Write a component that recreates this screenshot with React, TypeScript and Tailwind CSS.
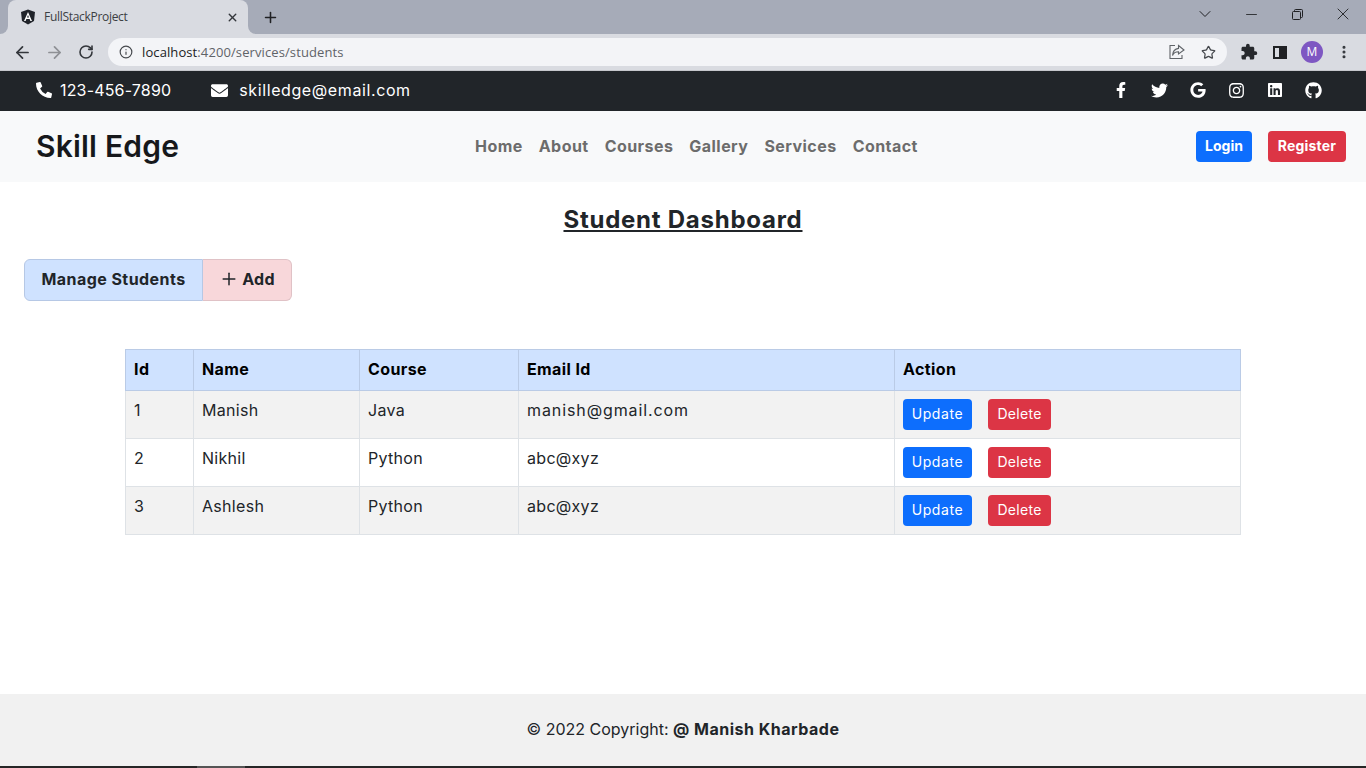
import { ArrowLeft, ArrowRight, RotateCw, Info, Star, Plus, X, Minus, ChevronDown, EllipsisVertical } from 'lucide-react';
import { FaPhoneAlt, FaEnvelope, FaFacebookF, FaTwitter, FaGoogle, FaInstagram, FaLinkedin, FaGithub } from 'react-icons/fa';
import { MdExtension } from 'react-icons/md';

const students = [
  { id: 1, name: 'Manish', course: 'Java', email: 'manish@gmail.com', emailClass: 'tracking-[0.9px]' },
  { id: 2, name: 'Nikhil', course: 'Python', email: 'abc@xyz', emailClass: 'tracking-[0.3px]' },
  { id: 3, name: 'Ashlesh', course: 'Python', email: 'abc@xyz', emailClass: 'tracking-[0.3px]' },
];

const navItems = ['Home', 'About', 'Courses', 'Gallery', 'Services', 'Contact'];

const BrowserBar = () => (
  <div className="font-['Open_Sans',sans-serif]">
    {/* tab strip */}
    <div className="h-[34px] bg-[#a6abb8] flex items-center pl-2">
      <div className="relative w-[240px] h-[34px] bg-[#d9dbe1] rounded-t-lg flex items-center pl-3 pr-[9px] text-[12px] tracking-[-0.3px] text-[#3c4043]">
        <div className="absolute left-[-8px] bottom-0 w-2 h-2 bg-[#d9dbe1]">
          <div className="w-full h-full bg-[#a6abb8] rounded-br-lg" />
        </div>
        <div className="absolute right-[-8px] bottom-0 w-2 h-2 bg-[#d9dbe1]">
          <div className="w-full h-full bg-[#a6abb8] rounded-bl-lg" />
        </div>
        <svg width="16" height="16" viewBox="0 0 16 16" className="mr-2 shrink-0">
          <path d="M8 0.5 L15 3 L14 12 L8 15.5 L2 12 L1 3 Z" fill="#20232a" />
          <path d="M8 3 L4 12 H5.6 L6.4 10 H9.6 L10.4 12 H12 Z M7 8.6 L8 6 L9 8.6 Z" fill="#fff" fillRule="evenodd" />
        </svg>
        <span className="flex-1">FullStackProject</span>
        <X size={13} strokeWidth={2.6} className="text-[#33363b]" />
      </div>
      <Plus size={17} strokeWidth={2.2} className="text-[#202124] ml-[14px]" />
      <div className="flex-1" />
      <div className="self-start flex h-[28px] text-[#202124]">
        <div className="w-[46px] flex items-center justify-center"><ChevronDown size={20} strokeWidth={1.2} /></div>
        <div className="w-[46px] flex items-center justify-center"><Minus size={17} strokeWidth={1.2} /></div>
        <div className="w-[46px] flex items-center justify-center">
          <svg width="11" height="11" viewBox="0 0 11 11" fill="none" stroke="#202124">
            <rect x="0.5" y="2.5" width="8" height="8" rx="1" />
            <path d="M2.5 2.5 V1.5 Q2.5 0.5 3.5 0.5 H9.5 Q10.5 0.5 10.5 1.5 V7.5 Q10.5 8.5 9.5 8.5 H8.5" />
          </svg>
        </div>
        <div className="w-[46px] flex items-center justify-center"><X size={20} strokeWidth={1.1} /></div>
      </div>
    </div>
    {/* toolbar */}
    <div className="h-[36px] bg-[#d9dbe1] flex items-center border-b border-[#c5c7cc] box-content">
      <ArrowLeft size={19} strokeWidth={2.2} className="text-[#33363b] ml-[13px]" />
      <ArrowRight size={19} strokeWidth={2.2} className="text-[#8e9095] ml-[13px]" />
      <RotateCw size={16} strokeWidth={2.4} className="text-[#33363b] ml-[14px]" />
      <div className="ml-[14px] w-[1119px] h-[28px] bg-[#f3f4f7] rounded-full flex items-center pl-[11px] text-[13px] text-[#5f6368]">
        <Info size={14} strokeWidth={2} className="text-[#45484d] mr-[9px]" />
        <span className="pt-[2px] tracking-[0.1px]"><span className="text-[#202124]">localhost</span>:4200/services/students</span>
        <div className="flex-1" />
        <svg width="16" height="16" viewBox="0 0 16 16" fill="none" stroke="#5f6368" strokeWidth="1.1" className="mr-[16px]">
          <path d="M6 1.5 H1 V14.5 H13 V11" />
          <path d="M9.5 1.5 L15 6 L9.5 10 V7.8 C6.5 7.8 4.5 9 3.5 11.5 C3.8 7.5 6 4.8 9.5 4.4 Z" />
        </svg>
        <Star size={15} strokeWidth={2} className="text-[#45484d] mr-[11px]" />
      </div>
      <MdExtension size={18} className="text-[#26282c] ml-[13px]" />
      <div className="ml-[15px] w-[14px] h-[13px] border-2 border-[#202124] flex justify-end">
        <div className="w-[6px] bg-[#202124]" />
      </div>
      <div className="ml-[14px] w-[22px] h-[22px] rounded-full bg-[#7e57c2] text-white text-[12px] flex items-center justify-center">M</div>
      <EllipsisVertical size={16} strokeWidth={2.6} className="text-[#33363b] ml-[13px]" />
    </div>
  </div>
);

const TopBar = () => (
  <div className="h-[40px] pb-[2px] bg-[#212529] text-white flex items-center pl-[36px] pr-[44px] text-[16px]">
    <FaPhoneAlt size={16} />
    <span className="ml-[8px] tracking-[0.17px]">123-456-7890</span>
    <FaEnvelope size={17} className="ml-[40px]" />
    <span className="ml-[11px] tracking-[0.6px]">skilledge@email.com</span>
    <div className="flex-1" />
    <div className="flex items-center gap-[22px]">
      <FaFacebookF size={16} />
      <FaTwitter size={17} />
      <FaGoogle size={16} />
      <FaInstagram size={17} />
      <FaLinkedin size={16} />
      <FaGithub size={17} />
    </div>
  </div>
);

const Navbar = () => (
  <div className="h-[71px] bg-[#f8f9fa] flex items-center pl-[36px] pr-[20px]">
    <div className="w-[143px] text-[30px] font-semibold tracking-[0.2px] text-[#16181b] whitespace-nowrap">Skill Edge</div>
    <nav className="ml-[296px] pb-[2px] flex gap-[16px] text-[16px] font-bold tracking-[0.45px] text-[#6c6c6c]">
      {navItems.map((item) => (
        <a key={item}>{item}</a>
      ))}
    </nav>
    <div className="flex-1" />
    <button className="w-[56px] h-[31px] pb-[2px] bg-[#0d6efd] text-white text-[14px] font-bold rounded">Login</button>
    <button className="ml-[16px] w-[78px] h-[31px] pb-[2px] bg-[#dc3545] text-white text-[14px] font-bold tracking-[0.2px] rounded">Register</button>
  </div>
);

const StudentTable = () => (
  <table className="mt-[48px] mx-auto w-[1116px] table-fixed border-collapse text-[16px] text-[#212529]">
    <colgroup>
      <col className="w-[68px]" />
      <col className="w-[166px]" />
      <col className="w-[159px]" />
      <col className="w-[376px]" />
      <col />
    </colgroup>
    <thead>
      <tr className="h-[41px] bg-[#cfe2ff] text-black text-left">
        {['Id', 'Name', 'Course', 'Email Id', 'Action'].map((h) => (
          <th key={h} className="border border-[#bacbe6] px-2 pb-[2px] font-bold tracking-[0.4px]">{h}</th>
        ))}
      </tr>
    </thead>
    <tbody className="tracking-[0.3px]">
      {students.map((s, i) => (
        <tr key={s.id} className={i % 2 === 0 ? 'h-[48px] bg-[#f2f2f2]' : 'h-[48px] bg-white'}>
          <td className="border border-[#dee2e6] px-2 pt-[7px] align-top">{s.id}</td>
          <td className="border border-[#dee2e6] px-2 pt-[7px] align-top">{s.name}</td>
          <td className="border border-[#dee2e6] px-2 pt-[7px] align-top">{s.course}</td>
          <td className={`border border-[#dee2e6] px-2 pt-[7px] align-top ${s.emailClass}`}>{s.email}</td>
          <td className="border border-[#dee2e6] px-2 align-middle">
            <div className="flex gap-[16px] text-[14px] text-white">
              <button className="w-[69px] h-[31px] pb-[2px] bg-[#0d6efd] rounded tracking-[0.6px]">Update</button>
              <button className="w-[63px] h-[31px] pb-[2px] bg-[#dc3545] rounded tracking-[0.3px]">Delete</button>
            </div>
          </td>
        </tr>
      ))}
    </tbody>
  </table>
);

export default function App() {
  return (
    <div className="h-[768px] overflow-hidden flex flex-col bg-white font-['Inter',sans-serif]">
      <BrowserBar />
      <TopBar />
      <Navbar />
      <main className="flex-1 pt-[20px]">
        <h1 className="text-center text-[24px] leading-[36px] font-bold tracking-[0.75px] text-[#212529] underline">Student Dashboard</h1>
        <div className="ml-[24px] mt-[21px] flex w-[268px] h-[42px] text-[16px] font-bold text-[#212529]">
          <div className="w-[179px] pb-[2px] bg-[#cfe2ff] border border-[#b6c8e5] rounded-l-md flex items-center justify-center tracking-[0.45px]">Manage Students</div>
          <div className="flex-1 pb-[2px] bg-[#f8d7da] border border-l-0 border-[#e0c2c6] rounded-r-md flex items-center justify-center gap-[3px] tracking-[0.3px]">
            <Plus size={20} strokeWidth={1.8} />
            Add
          </div>
        </div>
        <StudentTable />
      </main>
      <footer className="h-[72px] pb-[2px] bg-[#f1f1f1] flex items-center justify-center text-[16px] text-[#212529]">
        <span>© 2022 Copyright: <strong className="font-bold tracking-[0.5px]">@ Manish Kharbade</strong></span>
      </footer>
      <div className="h-[2px] bg-[#262626] pl-[197px]">
        <div className="w-[48px] h-full bg-[#555555]" />
      </div>
    </div>
  );
}
